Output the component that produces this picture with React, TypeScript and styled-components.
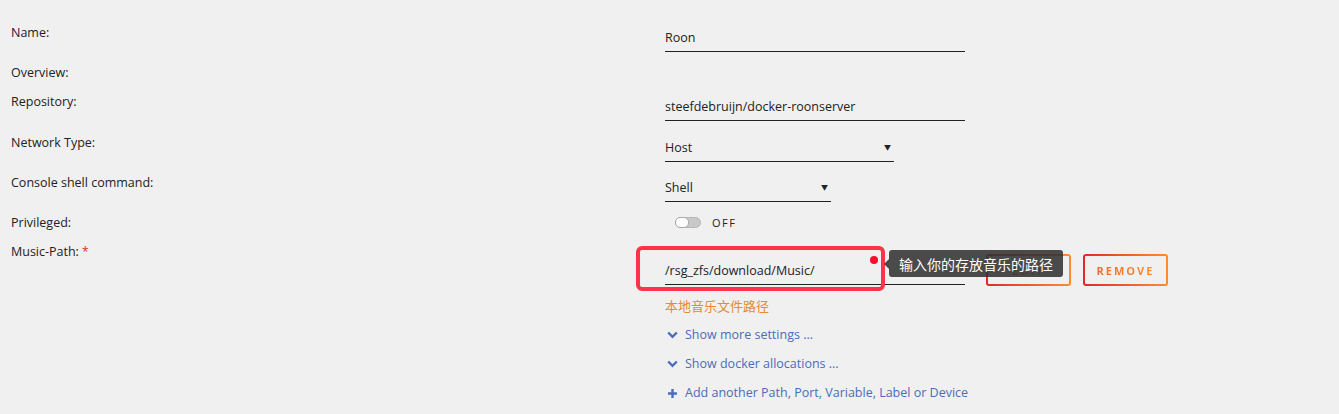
import React from 'react';
import styled, { createGlobalStyle } from 'styled-components';

const GlobalStyle = createGlobalStyle`
  html, body {
    margin: 0;
    padding: 0;
    background: #f0f0f0;
  }
  body {
    font-family: 'Open Sans', 'Noto Sans CJK SC', sans-serif;
    font-size: 12.5px;
    color: #222;
  }
`;

const Page = styled.div`
  padding: 25px 0 0 11px;
  width: 1328px;
  height: 389px;
  overflow: hidden;
`;

const Row = styled.div<{ $gap?: number }>`
  display: grid;
  grid-template-columns: 654px 1fr;
  align-items: start;
  margin-bottom: ${(p) => p.$gap ?? 13}px;
`;

const Label = styled.div`
  line-height: 16px;
  color: #222;
`;

const Required = styled.span`
  color: #e22828;
  margin-left: 3px;
  font-size: 12px;
  vertical-align: top;
`;

const Value = styled.div<{ $offset?: number }>`
  padding-top: ${(p) => p.$offset ?? 0}px;
  display: flex;
  flex-direction: column;
  align-items: flex-start;
`;

const TextInput = styled.div<{ $width: number; $top?: number }>`
  position: relative;
  width: ${(p) => p.$width}px;
  margin-top: ${(p) => p.$top ?? 0}px;
  padding: 5px 0;
  line-height: 16px;
  border-bottom: 1px solid #222;
  color: #222;
`;

const SelectBox = styled(TextInput)`
  &::after {
    content: '▼';
    position: absolute;
    right: 3px;
    top: 5px;
    font-size: 7px;
    color: #222;
  }
`;

const SwitchWrap = styled.div`
  display: flex;
  align-items: center;
  gap: 11px;
  padding: 0 0 0 10px;
  height: 14px;
`;

const Track = styled.div`
  position: relative;
  width: 26px;
  height: 11px;
  border-radius: 6px;
  background: #c8c8c8;
  border: 1px solid #b8b8b8;
  box-sizing: border-box;
`;

const Knob = styled.div`
  position: absolute;
  left: -1px;
  top: -1px;
  width: 14px;
  height: 11px;
  border-radius: 5px;
  background: #fff;
  border: 1px solid #a8a8a8;
  box-sizing: border-box;
`;

const SwitchText = styled.span`
  font-size: 11px;
  letter-spacing: 1.5px;
  color: #222;
`;

const PathLine = styled.div`
  position: relative;
  display: flex;
  align-items: flex-start;
  gap: 21px;
`;

const GradientButton = styled.div`
  width: 85px;
  height: 32px;
  box-sizing: border-box;
  display: flex;
  align-items: center;
  justify-content: center;
  font-size: 11px;
  font-weight: 700;
  letter-spacing: 2px;
  border-radius: 3px;
  background:
    linear-gradient(#f0f0f0, #f0f0f0) padding-box,
    linear-gradient(90deg, #e22828 0, #ff8c2f 100%) border-box;
  border: 2px solid transparent;
  span {
    background: linear-gradient(90deg, #f06a2a 0, #ff8c2f 100%);
    -webkit-background-clip: text;
    background-clip: text;
    color: transparent;
  }
`;

const ButtonGroup = styled.div`
  display: flex;
  gap: 12px;
`;

const Highlight = styled.div`
  position: absolute;
  left: -29px;
  top: -8px;
  width: 249px;
  height: 45px;
  border: 4px solid #ff3347;
  border-radius: 6px;
  box-sizing: border-box;
  pointer-events: none;
  &::after {
    content: '';
    position: absolute;
    right: 3px;
    top: 6px;
    width: 8px;
    height: 8px;
    border-radius: 50%;
    background: #f0122b;
  }
`;

const Tooltip = styled.div`
  position: absolute;
  left: 224px;
  top: -4px;
  height: 27px;
  padding: 0 10px;
  display: flex;
  align-items: center;
  background: rgba(50, 50, 50, 0.88);
  color: #fff;
  font-size: 14px;
  border-radius: 3px;
  white-space: nowrap;
  z-index: 2;
  &::before {
    content: '';
    position: absolute;
    left: -5px;
    top: 50%;
    margin-top: -5px;
    border-style: solid;
    border-width: 5px 5px 5px 0;
    border-color: transparent rgba(50, 50, 50, 0.88) transparent transparent;
  }
`;

const Hint = styled.div`
  margin-top: 12px;
  color: #e68a2e;
  font-size: 13px;
  line-height: 16px;
`;

const LinkList = styled.div`
  margin-top: 13px;
  display: flex;
  flex-direction: column;
  gap: 13px;
`;

const ActionLink = styled.a`
  display: flex;
  align-items: center;
  gap: 7px;
  padding-left: 2px;
  line-height: 16px;
  color: #486dba;
  text-decoration: none;
  cursor: pointer;
  svg {
    flex: none;
  }
`;

const Chevron = () => (
  <svg width="11" height="8" viewBox="0 0 11 8">
    <path d="M1.2 1.5 L5.5 5.8 L9.8 1.5" fill="none" stroke="#486dba" strokeWidth="2.4" />
  </svg>
);

const Plus = () => (
  <svg width="11" height="11" viewBox="0 0 11 11">
    <path d="M5.5 1 V10 M1 5.5 H10" stroke="#486dba" strokeWidth="2.4" />
  </svg>
);

export default function App() {
  return (
    <>
      <GlobalStyle />
      <Page>
        <Row>
          <Label>Name:</Label>
          <Value>
            <TextInput $width={300}>Roon</TextInput>
          </Value>
        </Row>
        <Row>
          <Label>Overview:</Label>
          <Value />
        </Row>
        <Row $gap={14}>
          <Label>Repository:</Label>
          <Value>
            <TextInput $width={300}>steefdebruijn/docker-roonserver</TextInput>
          </Value>
        </Row>
        <Row>
          <Label>Network Type:</Label>
          <Value>
            <SelectBox $width={229}>Host</SelectBox>
          </Value>
        </Row>
        <Row>
          <Label>Console shell command:</Label>
          <Value>
            <SelectBox $width={166}>Shell</SelectBox>
          </Value>
        </Row>
        <Row>
          <Label>Privileged:</Label>
          <Value>
            <SwitchWrap>
              <Track>
                <Knob />
              </Track>
              <SwitchText>OFF</SwitchText>
            </SwitchWrap>
          </Value>
        </Row>
        <Row $gap={0}>
          <Label>
            Music-Path:<Required>*</Required>
          </Label>
          <Value $offset={10}>
            <PathLine>
              <TextInput $width={300} $top={4}>
                /rsg_zfs/download/Music/
              </TextInput>
              <ButtonGroup>
                <GradientButton>
                  <span>EDIT</span>
                </GradientButton>
                <GradientButton>
                  <span>REMOVE</span>
                </GradientButton>
              </ButtonGroup>
              <Highlight />
              <Tooltip>输入你的存放音乐的路径</Tooltip>
            </PathLine>
            <Hint>本地音乐文件路径</Hint>
            <LinkList>
              <ActionLink>
                <Chevron />
                Show more settings ...
              </ActionLink>
              <ActionLink>
                <Chevron />
                Show docker allocations ...
              </ActionLink>
              <ActionLink>
                <Plus />
                Add another Path, Port, Variable, Label or Device
              </ActionLink>
            </LinkList>
          </Value>
        </Row>
      </Page>
    </>
  );
}
